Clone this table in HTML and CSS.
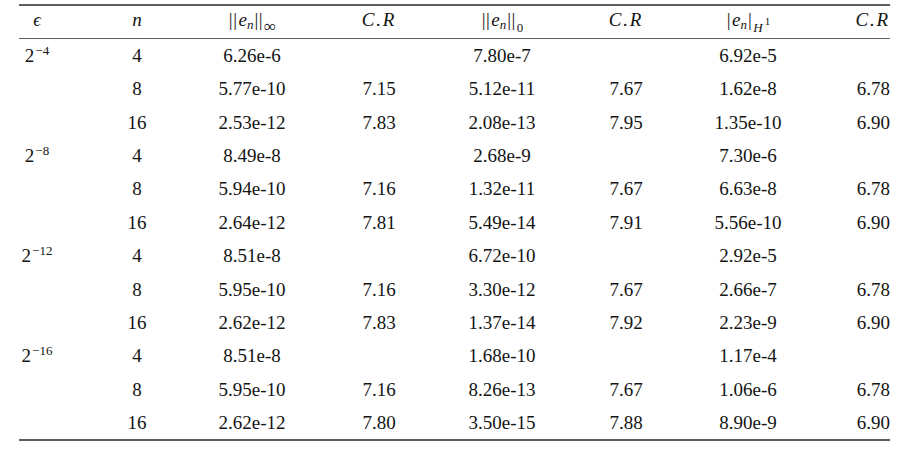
FILE: index.html
```html
<!DOCTYPE html>
<html>
<head>
<meta charset="utf-8">
<link rel="stylesheet" href="styles.css">
</head>
<body>
<div class="table">
  <div class="row head">
    <div class="cell"><span class="mi">ϵ</span></div>
    <div class="cell"><span class="mi">n</span></div>
    <div class="cell"><span class="bar">||</span><span class="mi">e</span><span class="sub mi">n</span><span class="bar">||</span><span class="sub low inf">∞</span></div>
    <div class="cell"><span class="mi cr">C.R</span></div>
    <div class="cell"><span class="bar">||</span><span class="mi">e</span><span class="sub mi">n</span><span class="bar">||</span><span class="sub low">0</span></div>
    <div class="cell"><span class="mi cr">C.R</span></div>
    <div class="cell"><span class="bar">|</span><span class="mi">e</span><span class="sub mi">n</span><span class="bar">|</span><span class="sub low mi">H</span><span class="sup1">1</span></div>
    <div class="cell end"><span class="mi cr">C.R</span></div>
  </div>
  <div class="body">
    <div class="row"><div class="cell">2<span class="sup">−4</span></div><div class="cell">4</div><div class="cell">6.26e-6</div><div class="cell"></div><div class="cell">7.80e-7</div><div class="cell"></div><div class="cell">6.92e-5</div><div class="cell end"></div></div>
    <div class="row"><div class="cell"></div><div class="cell">8</div><div class="cell">5.77e-10</div><div class="cell">7.15</div><div class="cell">5.12e-11</div><div class="cell">7.67</div><div class="cell">1.62e-8</div><div class="cell end">6.78</div></div>
    <div class="row"><div class="cell"></div><div class="cell">16</div><div class="cell">2.53e-12</div><div class="cell">7.83</div><div class="cell">2.08e-13</div><div class="cell">7.95</div><div class="cell">1.35e-10</div><div class="cell end">6.90</div></div>
    <div class="row"><div class="cell">2<span class="sup">−8</span></div><div class="cell">4</div><div class="cell">8.49e-8</div><div class="cell"></div><div class="cell">2.68e-9</div><div class="cell"></div><div class="cell">7.30e-6</div><div class="cell end"></div></div>
    <div class="row"><div class="cell"></div><div class="cell">8</div><div class="cell">5.94e-10</div><div class="cell">7.16</div><div class="cell">1.32e-11</div><div class="cell">7.67</div><div class="cell">6.63e-8</div><div class="cell end">6.78</div></div>
    <div class="row"><div class="cell"></div><div class="cell">16</div><div class="cell">2.64e-12</div><div class="cell">7.81</div><div class="cell">5.49e-14</div><div class="cell">7.91</div><div class="cell">5.56e-10</div><div class="cell end">6.90</div></div>
    <div class="row"><div class="cell">2<span class="sup">−12</span></div><div class="cell">4</div><div class="cell">8.51e-8</div><div class="cell"></div><div class="cell">6.72e-10</div><div class="cell"></div><div class="cell">2.92e-5</div><div class="cell end"></div></div>
    <div class="row"><div class="cell"></div><div class="cell">8</div><div class="cell">5.95e-10</div><div class="cell">7.16</div><div class="cell">3.30e-12</div><div class="cell">7.67</div><div class="cell">2.66e-7</div><div class="cell end">6.78</div></div>
    <div class="row"><div class="cell"></div><div class="cell">16</div><div class="cell">2.62e-12</div><div class="cell">7.83</div><div class="cell">1.37e-14</div><div class="cell">7.92</div><div class="cell">2.23e-9</div><div class="cell end">6.90</div></div>
    <div class="row"><div class="cell">2<span class="sup">−16</span></div><div class="cell">4</div><div class="cell">8.51e-8</div><div class="cell"></div><div class="cell">1.68e-10</div><div class="cell"></div><div class="cell">1.17e-4</div><div class="cell end"></div></div>
    <div class="row"><div class="cell"></div><div class="cell">8</div><div class="cell">5.95e-10</div><div class="cell">7.16</div><div class="cell">8.26e-13</div><div class="cell">7.67</div><div class="cell">1.06e-6</div><div class="cell end">6.78</div></div>
    <div class="row"><div class="cell"></div><div class="cell">16</div><div class="cell">2.62e-12</div><div class="cell">7.80</div><div class="cell">3.50e-15</div><div class="cell">7.88</div><div class="cell">8.90e-9</div><div class="cell end">6.90</div></div>
  </div>
</div>
</body>
</html>
```

FILE: styles.css
```css
html, body {
  margin: 0;
  padding: 0;
  background: #ffffff;
}
body {
  font-family: "Liberation Serif", "DejaVu Serif", serif;
  font-size: 19px;
  color: #141414;
  padding-top: 4px;
}
.table {
  margin-left: 19px;
  width: 871px;
  border-top: 2px solid #5e5e5e;
  border-bottom: 2px solid #5e5e5e;
}
.row {
  display: grid;
  grid-template-columns: 36px 164px 66px 188px 58px 190px 54px 115px;
}
.head {
  height: 32px;
  border-bottom: 1.5px solid #5e5e5e;
}
.head .cell {
  line-height: 28px;
}
.body .cell {
  height: 33.36px;
  line-height: 33.36px;
}
.cell {
  margin: 0 -24px;
  text-align: center;
  white-space: nowrap;
}
.cell.end {
  margin-right: 0;
  text-align: right;
}
.mi {
  font-style: italic;
}
.cr {
  letter-spacing: 1.8px;
}
.bar {
  letter-spacing: 0.5px;
  margin: 0 1px;
}
.sub {
  font-size: 13px;
  line-height: 0;
  vertical-align: -3px;
}
.sub.low {
  vertical-align: -6px;
}
.inf {
  font-size: 17px;
}
.sup1 {
  font-size: 11px;
  line-height: 0;
  vertical-align: 1px;
  margin-left: 2px;
}
.sup {
  font-size: 13px;
  line-height: 0;
  vertical-align: 7px;
  margin-left: 1px;
}
```
